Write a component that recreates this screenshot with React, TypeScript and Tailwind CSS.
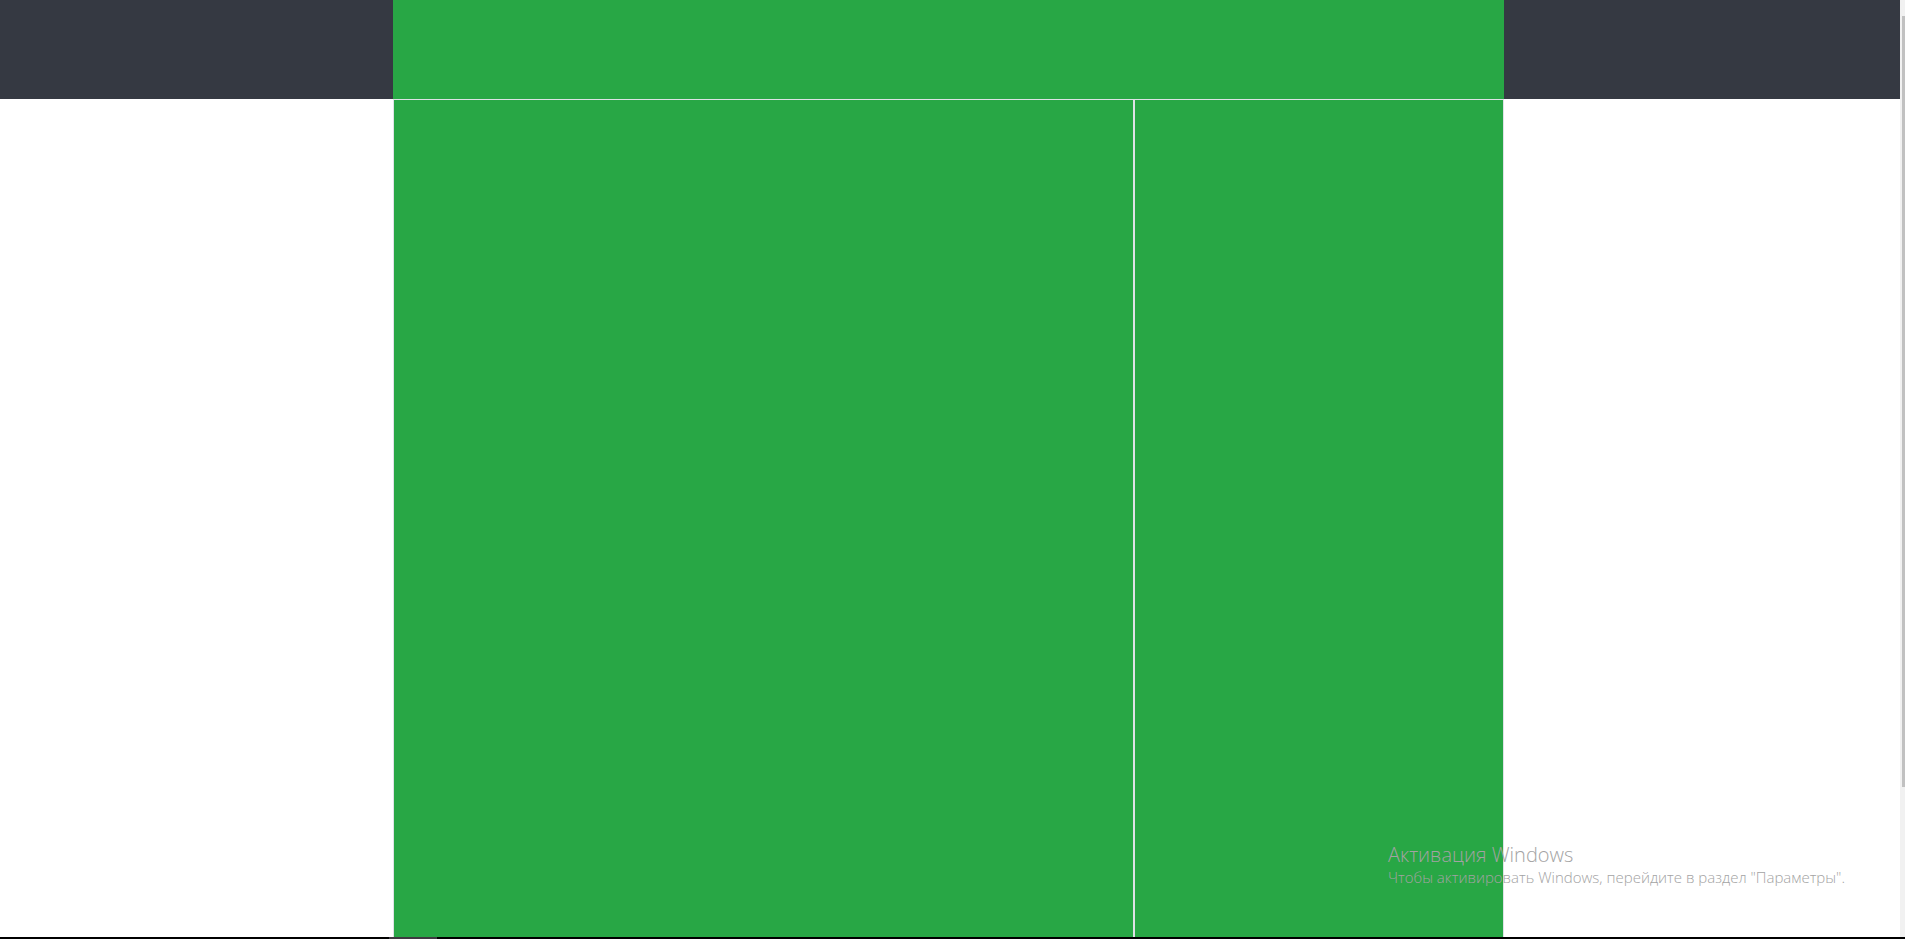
function ScrollTrack() {
  return (
    <div aria-hidden="true" className="flex w-[5px] shrink-0 flex-col items-end bg-[#f1f1f1] pt-4">
      <div className="h-[83.7%] w-[3px] bg-[#c1c1c1]" />
    </div>
  );
}

function ActivationNotice() {
  return (
    <aside className="absolute right-[60px] bottom-[51px] font-light whitespace-nowrap text-[#a3a3a3]">
      <p className="text-[20px] leading-[23px]">Активация Windows</p>
      <p className="text-[15px] leading-[22px]">
        Чтобы активировать Windows, перейдите в раздел "Параметры".
      </p>
    </aside>
  );
}

export default function App() {
  return (
    <div className="relative flex min-h-screen flex-col bg-white font-['Open_Sans','Noto_Sans',sans-serif]">
      <div className="flex flex-1">
        <div className="flex flex-1 flex-col">
          <header className="bg-[#353942] pr-[3px]">
            <div className="mx-auto h-[99px] max-w-[1111px] bg-[#28a745]" />
          </header>
          <main className="flex flex-1 pr-[3px]">
            <div className="mx-auto grid w-full max-w-[1111px] grid-cols-[2fr_1fr] border-t border-[#dee2e6]">
              <section className="border-x border-[#dee2e6] bg-[#28a745]" />
              <aside className="border-x border-[#dee2e6] bg-[#28a745]" />
            </div>
          </main>
        </div>
        <ScrollTrack />
      </div>
      <footer className="flex h-[2px] bg-black pl-[389px]">
        <div className="w-12 bg-[#3d3a40]" />
      </footer>
      <ActivationNotice />
    </div>
  );
}
